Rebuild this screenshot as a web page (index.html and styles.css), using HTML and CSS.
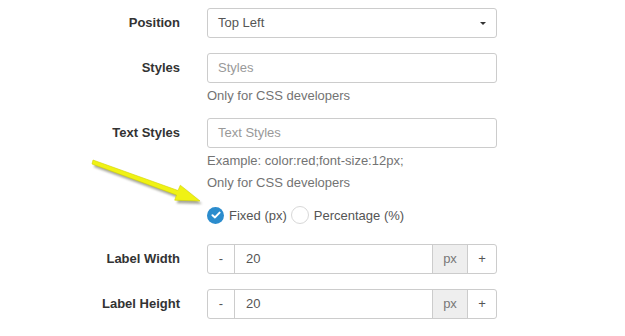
FILE: index.html
```html
<!DOCTYPE html>
<html>
<head>
<meta charset="utf-8">
<link rel="stylesheet" href="styles.css">
</head>
<body>
<form class="form">
  <div class="row">
    <label class="label">Position</label>
    <div class="ctrl">
      <div class="select">Top Left<span class="caret"></span></div>
    </div>
  </div>
  <div class="row gap-small">
    <label class="label">Styles</label>
    <div class="ctrl">
      <div class="input placeholder">Styles</div>
      <div class="help first">Only for CSS developers</div>
    </div>
  </div>
  <div class="row gap-small">
    <label class="label">Text Styles</label>
    <div class="ctrl">
      <div class="input placeholder">Text Styles</div>
      <div class="help first">Example: color:red;font-size:12px;</div>
      <div class="help">Only for CSS developers</div>
      <div class="radios">
        <span class="radio checked"><svg width="10" height="8" viewBox="0 0 10 8"><path d="M1.5 4.2 L4 6.4 L8.6 1.6" fill="none" stroke="#fff" stroke-width="2" stroke-linecap="round" stroke-linejoin="round"/></svg></span>
        <span class="rtext">Fixed (px)</span>
        <span class="radio"></span>
        <span class="rtext">Percentage (%)</span>
      </div>
    </div>
  </div>
  <div class="row">
    <label class="label">Label Width</label>
    <div class="ctrl">
      <div class="group">
        <span class="btn">-</span>
        <span class="gin">20</span>
        <span class="addon">px</span>
        <span class="btn plus">+</span>
      </div>
    </div>
  </div>
  <div class="row">
    <label class="label">Label Height</label>
    <div class="ctrl">
      <div class="group">
        <span class="btn">-</span>
        <span class="gin">20</span>
        <span class="addon">px</span>
        <span class="btn plus">+</span>
      </div>
    </div>
  </div>
</form>
<svg class="arrow" width="625" height="336" viewBox="0 0 625 336">
  <defs>
    <filter id="blur" x="-10%" y="-30%" width="120%" height="160%"><feGaussianBlur stdDeviation="1.2"/></filter>
  </defs>
  <g transform="translate(2,3)" fill="#8a8a7a" opacity="0.75" filter="url(#blur)">
    <polygon points="93,160 178,190.5 180.3,185.2 200,201 174.7,200.2 176.5,195 92,164"/>
  </g>
  <polygon points="93,160 178,190.5 180.3,185.2 200,201 174.7,200.2 176.5,195 92,164" fill="#f0f214" stroke="#d2d400" stroke-width="0.6"/>
</svg>
</body>
</html>
```

FILE: styles.css
```css
html, body {
  margin: 0;
  padding: 0;
  background: #fff;
}
body {
  font-family: "Liberation Sans", Arial, sans-serif;
  font-size: 13px;
  color: #333;
  position: relative;
  width: 625px;
  height: 336px;
  overflow: hidden;
}
.form {
  padding-top: 8px;
}
.row {
  display: flex;
  align-items: flex-start;
  margin-bottom: 15px;
}
.row.gap-small {
  margin-bottom: 11px;
}
.label {
  width: 180px;
  flex: none;
  text-align: right;
  font-weight: bold;
  line-height: 30px;
  height: 30px;
  color: #333;
}
.ctrl {
  margin-left: 27px;
  width: 290px;
}
.select, .input {
  box-sizing: border-box;
  height: 30px;
  border: 1px solid #ccc;
  border-radius: 3px;
  padding: 0 10px;
  line-height: 28px;
  color: #555;
  position: relative;
}
.placeholder {
  color: #999;
}
.caret {
  position: absolute;
  right: 10px;
  top: 13px;
  width: 0;
  height: 0;
  border-left: 3px solid transparent;
  border-right: 3px solid transparent;
  border-top: 3px solid #333;
}
.help {
  color: #737373;
  line-height: 22px;
  height: 22px;
}
.help.first {
  margin-top: 2px;
}
.radios {
  display: flex;
  align-items: center;
  margin-top: 11px;
  margin-bottom: 8px;
  height: 20px;
  color: #555;
}
.radio {
  box-sizing: border-box;
  width: 18px;
  height: 18px;
  border-radius: 50%;
  border: 1px solid #d8d8d8;
  background: #fff;
  display: inline-flex;
  align-items: center;
  justify-content: center;
  margin-left: 1px;
}
.radio.checked {
  width: 17px;
  height: 17px;
  border: none;
  background: #2b8ccd;
  margin-left: 0;
}
.rtext {
  margin-left: 5px;
  margin-right: 3px;
}
.group {
  display: flex;
  height: 30px;
  box-sizing: border-box;
  border: 1px solid #ccc;
  border-radius: 3px;
  color: #555;
  line-height: 28px;
}
.btn {
  width: 26px;
  text-align: center;
  flex: none;
}
.gin {
  flex: 1;
  border-left: 1px solid #ccc;
  padding-left: 11px;
}
.addon {
  width: 34px;
  flex: none;
  text-align: center;
  background: #eee;
  border-left: 1px solid #ccc;
  border-right: 1px solid #ccc;
  color: #777;
}
.btn.plus {
  width: 28px;
}
.arrow {
  position: absolute;
  left: 0;
  top: 0;
  pointer-events: none;
}
```
